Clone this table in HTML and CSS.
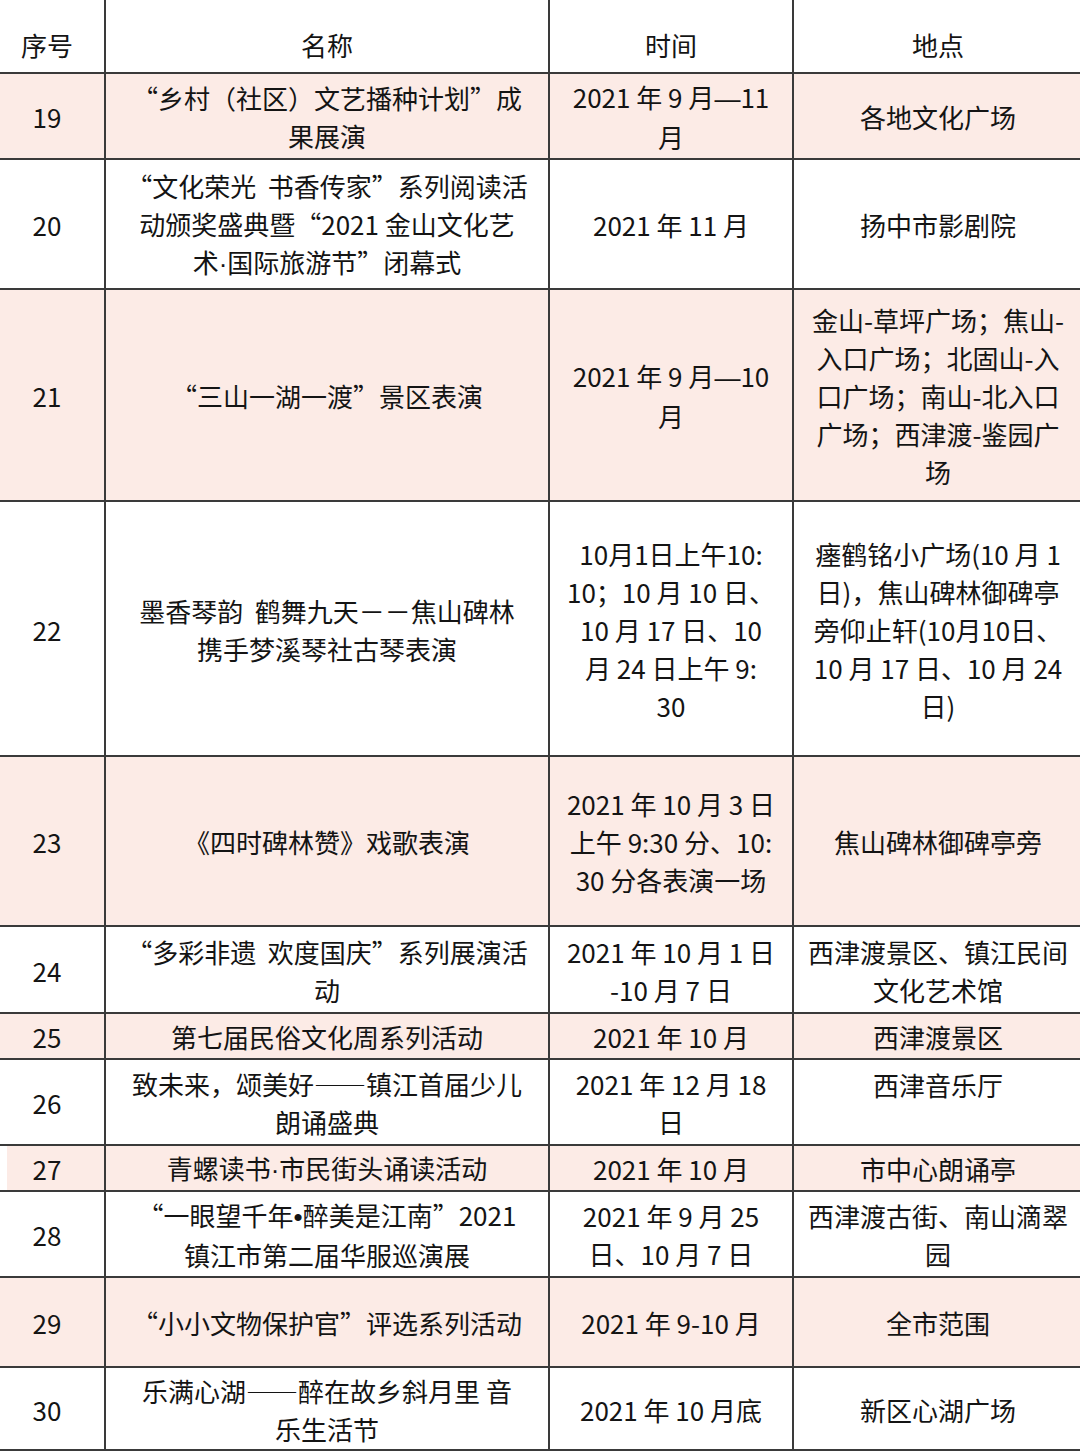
FILE: index.html
```html
<!DOCTYPE html>
<html lang="zh-CN">
<head>
<meta charset="utf-8">
<title>活动表</title>
<link rel="stylesheet" href="styles.css">
</head>
<body>
<table class="events">
  <colgroup>
    <col class="c-no">
    <col class="c-name">
    <col class="c-time">
    <col class="c-place">
  </colgroup>
  <thead>
    <tr class="r-head">
      <th>序号</th>
      <th>名称</th>
      <th>时间</th>
      <th>地点</th>
    </tr>
  </thead>
  <tbody>
    <tr class="r19 pink">
      <td>19</td>
      <td>“乡村（社区）文艺播种计划”成<br>果展演</td>
      <td>2021 年 9 月<span class="latin">—</span>11<br>月</td>
      <td>各地文化广场</td>
    </tr>
    <tr class="r20">
      <td>20</td>
      <td>“文化荣光&nbsp;&nbsp;书香传家”系列阅读活<br>动颁奖盛典暨“2021 金山文化艺<br>术<span class="latin">·</span>国际旅游节”闭幕式</td>
      <td>2021 年 11 月</td>
      <td>扬中市影剧院</td>
    </tr>
    <tr class="r21 pink">
      <td>21</td>
      <td>“三山一湖一渡”景区表演</td>
      <td>2021 年 9 月<span class="latin">—</span>10<br>月</td>
      <td>金山-草坪广场；焦山-<br>入口广场；北固山-入<br>口广场；南山-北入口<br>广场；西津渡-鉴园广<br>场</td>
    </tr>
    <tr class="r22">
      <td>22</td>
      <td>墨香琴韵&nbsp;&nbsp;鹤舞九天－－焦山碑林<br>携手梦溪琴社古琴表演</td>
      <td>10月1日上午10:<br>10；10 月 10 日、<br>10 月 17 日、10<br>月 24 日上午 9:<br>30</td>
      <td>瘗鹤铭小广场(10 月 1<br>日)，焦山碑林御碑亭<br>旁仰止轩(10月10日、<br>10 月 17 日、10 月 24<br>日)</td>
    </tr>
    <tr class="r23 pink">
      <td>23</td>
      <td>《四时碑林赞》戏歌表演</td>
      <td>2021 年 10 月 3 日<br>上午 9:30 分、10:<br>30 分各表演一场</td>
      <td>焦山碑林御碑亭旁</td>
    </tr>
    <tr class="r24">
      <td>24</td>
      <td>“多彩非遗&nbsp;&nbsp;欢度国庆”系列展演活<br>动</td>
      <td>2021 年 10 月 1 日<br>-10 月 7 日</td>
      <td>西津渡景区、镇江民间<br>文化艺术馆</td>
    </tr>
    <tr class="r25 pink">
      <td class="gap-s">25</td>
      <td>第七届民俗文化周系列活动</td>
      <td>2021 年 10 月</td>
      <td>西津渡景区</td>
    </tr>
    <tr class="r26">
      <td>26</td>
      <td>致未来，颂美好——镇江首届少儿<br>朗诵盛典</td>
      <td>2021 年 12 月 18<br>日</td>
      <td class="top">西津音乐厅</td>
    </tr>
    <tr class="r27 pink">
      <td class="gap-l">27</td>
      <td>青螺读书<span class="latin">·</span>市民街头诵读活动</td>
      <td>2021 年 10 月</td>
      <td>市中心朗诵亭</td>
    </tr>
    <tr class="r28">
      <td>28</td>
      <td>“一眼望千年<span class="latin">•</span>醉美是江南”2021<br>镇江市第二届华服巡演展</td>
      <td>2021 年 9 月 25<br>日、10 月 7 日</td>
      <td>西津渡古街、南山滴翠<br>园</td>
    </tr>
    <tr class="r29 pink">
      <td>29</td>
      <td>“小小文物保护官”评选系列活动</td>
      <td>2021 年 9-10 月</td>
      <td>全市范围</td>
    </tr>
    <tr class="r30">
      <td>30</td>
      <td>乐满心湖——醉在故乡斜月里 音<br>乐生活节</td>
      <td>2021 年 10 月底</td>
      <td>新区心湖广场</td>
    </tr>
  </tbody>
</table>
</body>
</html>
```
FILE: styles.css
```css
html, body {
  margin: 0;
  padding: 0;
  background: #ffffff;
  overflow: hidden;
}

.events {
  border-collapse: collapse;
  table-layout: fixed;
  width: 1094px;
  margin: -2px 0 0 -12px;
  font-family: "Noto Sans CJK SC", "Noto Sans", sans-serif;
  font-size: 26px;
  line-height: 38px;
  color: #141414;
}

.latin {
  font-family: "Liberation Sans", "Noto Sans", sans-serif;
}

.c-no { width: 116px; }
.c-name { width: 444px; }
.c-time { width: 244px; }
.c-place { width: 290px; }

.events th,
.events td {
  border: 2px solid #3a3a3a;
  padding: 2px 4px 0;
  text-align: center;
  vertical-align: middle;
  white-space: nowrap;
  font-weight: 400;
}

.events th {
  padding-top: 18px;
}

.pink td {
  background: #fcebe6;
}

.pink td.gap-s {
  background: linear-gradient(to right, #ffffff 5px, #fcebe6 5px);
}

.pink td.gap-l {
  background: linear-gradient(to right, #ffffff 17px, #fcebe6 17px);
}

.events td.top {
  vertical-align: top;
  padding-top: 6px;
}

.r-head { height: 74px; }
.r19 { height: 86px; }
.r20 { height: 130px; }
.r21 { height: 212px; }
.r22 { height: 255px; }
.r23 { height: 170px; }
.r24 { height: 87px; }
.r25 { height: 46px; }
.r26 { height: 86px; }
.r27 { height: 46px; }
.r28 { height: 86px; }
.r29 { height: 90px; }
.r30 { height: 83px; }
```
